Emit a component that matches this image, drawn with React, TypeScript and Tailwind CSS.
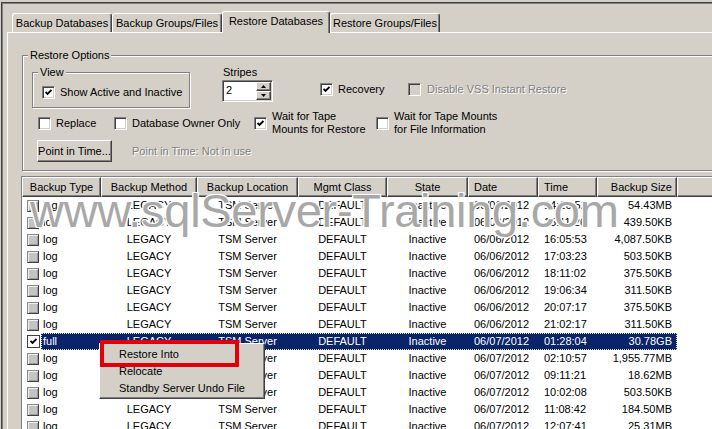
import React from "react";

type Row = { type: string; date: string; time: string; size: string; checked?: boolean };

const rows: Row[] = [
  { type: "log", date: "06/06/2012", time: "14:16:52", size: "54.43MB" },
  { type: "log", date: "06/06/2012", time: "15:11:26", size: "439.50KB" },
  { type: "log", date: "06/06/2012", time: "16:05:53", size: "4,087.50KB" },
  { type: "log", date: "06/06/2012", time: "17:03:23", size: "503.50KB" },
  { type: "log", date: "06/06/2012", time: "18:11:02", size: "375.50KB" },
  { type: "log", date: "06/06/2012", time: "19:06:34", size: "311.50KB" },
  { type: "log", date: "06/06/2012", time: "20:07:17", size: "375.50KB" },
  { type: "log", date: "06/06/2012", time: "21:02:17", size: "311.50KB" },
  { type: "full", date: "06/07/2012", time: "01:28:04", size: "30.78GB", checked: true },
  { type: "log", date: "06/07/2012", time: "02:10:57", size: "1,955.77MB" },
  { type: "log", date: "06/07/2012", time: "09:11:21", size: "18.62MB" },
  { type: "log", date: "06/07/2012", time: "10:02:08", size: "503.50KB" },
  { type: "log", date: "06/07/2012", time: "11:08:42", size: "184.50MB" },
  { type: "log", date: "06/07/2012", time: "12:07:41", size: "25.31MB" },
];

const raised =
  "border border-white border-r-[#404040] border-b-[#404040] shadow-[inset_-1px_-1px_0_#808080]";

const CheckMark = () => (
  <svg width="7" height="7" viewBox="0 0 7 7">
    <path d="M0.5 3 L2.5 5 L6.5 1" stroke="#000" strokeWidth="1.9" fill="none" />
  </svg>
);

function Box({ checked, disabled }: { checked?: boolean; disabled?: boolean }) {
  return (
    <span
      className={`flex h-[13px] w-[13px] shrink-0 items-center justify-center border border-[#808080] border-r-white border-b-white shadow-[inset_1px_1px_0_#404040,inset_-1px_-1px_0_#d4d0c8] ${
        disabled ? "bg-[#d4d0c8]" : "bg-white"
      }`}
    >
      {checked && <CheckMark />}
    </span>
  );
}

function Tab({ label, w, active }: { label: string; w: string; active?: boolean }) {
  if (active)
    return (
      <div
        className={`relative z-10 -mb-px flex h-[22px] items-center justify-center rounded-t-[3px] border-t border-l border-white border-r border-r-[#404040] bg-[#d4d0c8] pb-[2px] shadow-[inset_-1px_0_0_#808080] ${w}`}
      >
        {label}
      </div>
    );
  return (
    <div
      className={`flex h-[19px] items-center justify-center rounded-t-[3px] border-t border-l border-white border-r border-r-[#404040] shadow-[inset_-1px_0_0_#808080] ${w}`}
    >
      {label}
    </div>
  );
}

const disabledText = "text-[#808080] [text-shadow:1px_1px_0_#fff]";

export default function App() {
  return (
    <div className="relative h-[429px] w-[712px] overflow-hidden bg-[#d4d0c8] font-['Liberation_Sans',Arial,sans-serif] text-[11px] leading-[13px] text-black">
      <div className="mt-[2px] ml-px h-[440px] border-t border-l border-[#404040] shadow-[inset_1px_1px_0_#808080]">
        {/* tabs */}
        <div className="flex h-[29px] items-end pl-[10px]">
          <Tab label="Backup Databases" w="w-[100px]" />
          <Tab label="Backup Groups/Files" w="w-[110px]" />
          <Tab label="Restore Databases" w="w-[108px]" active />
          <Tab label="Restore Groups/Files" w="w-[110px]" />
        </div>

        <div className="ml-[5px] h-[420px] border-t border-l border-white">
          {/* Restore Options */}
          <fieldset className="mt-[16px] ml-[14px] w-[700px] border border-[#808080] pb-[8px] shadow-[inset_1px_1px_0_#fff,1px_1px_0_#fff]">
            <legend className="ml-[5px] bg-[#d4d0c8] px-[2px]">Restore Options</legend>

            <div className="mt-[4px] flex items-start">
              <fieldset className="ml-[9px] w-[158px] border border-[#808080] pt-[7px] pb-[8px] pl-[9px] shadow-[inset_1px_1px_0_#fff,1px_1px_0_#fff]">
                <legend className="ml-[-4px] bg-[#d4d0c8] px-[2px]">View</legend>
                <div className="flex h-[13px] items-center gap-[5px]">
                  <Box checked />
                  <span>Show Active and Inactive</span>
                </div>
              </fieldset>

              <div className="ml-[32px] flex w-[51px] flex-col">
                <span className="pl-px">Stripes</span>
                <div className="mt-px flex h-[22px] border border-[#808080] border-r-white border-b-white bg-white shadow-[inset_1px_1px_0_#404040,inset_-1px_-1px_0_#d4d0c8]">
                  <span className="flex-1 pt-[3px] pl-[3px]">2</span>
                  <div className="flex w-[16px] flex-col py-px pr-px">
                    <div className={`flex h-[9px] items-center justify-center bg-[#d4d0c8] ${raised}`}>
                      <svg width="5" height="3" viewBox="0 0 5 3">
                        <path d="M2.5 0 L5 3 L0 3 Z" fill="#000" />
                      </svg>
                    </div>
                    <div className={`flex h-[9px] items-center justify-center bg-[#d4d0c8] ${raised}`}>
                      <svg width="5" height="3" viewBox="0 0 5 3">
                        <path d="M0 0 L5 0 L2.5 3 Z" fill="#000" />
                      </svg>
                    </div>
                  </div>
                </div>
              </div>

              <div className="mt-[17px] ml-[47px] flex w-[88px] items-center gap-[5px]">
                <Box checked />
                <span>Recovery</span>
              </div>
              <div className="mt-[17px] flex items-center gap-[6px]">
                <Box disabled />
                <span className={disabledText}>Disable VSS Instant Restore</span>
              </div>
            </div>

            <div className="mt-[2px] ml-[15px] flex h-[26px] items-center">
              <div className="flex w-[76px] items-center gap-[5px]">
                <Box />
                <span>Replace</span>
              </div>
              <div className="flex w-[140px] items-center gap-[5px]">
                <Box />
                <span>Database Owner Only</span>
              </div>
              <div className="flex w-[122px] items-center gap-[5px]">
                <Box checked />
                <span>
                  Wait for Tape
                  <br />
                  Mounts for Restore
                </span>
              </div>
              <div className="flex items-center gap-[5px]">
                <Box />
                <span>
                  Wait for Tape Mounts
                  <br />
                  for File Information
                </span>
              </div>
            </div>

            <div className="mt-[4px] ml-[14px] flex items-center">
              <button className={`flex h-[22px] w-[75px] items-center justify-center bg-[#d4d0c8] ${raised}`}>
                Point in Time...
              </button>
              <span className={`ml-[20px] ${disabledText}`}>Point in Time: Not in use</span>
            </div>
          </fieldset>

          {/* list */}
          <div className="mt-[5px] ml-[13px] w-[700px] border-t border-l border-[#808080] bg-white">
            <div className="flex h-[20px] bg-[#d4d0c8]">
              <div className={`flex w-[79px] items-center justify-center ${raised}`}>Backup Type</div>
              <div className={`flex w-[96px] items-center justify-center ${raised}`}>Backup Method</div>
              <div className={`flex w-[101px] items-center justify-center ${raised}`}>Backup Location</div>
              <div className={`flex w-[89px] items-center justify-center ${raised}`}>Mgmt Class</div>
              <div className={`flex w-[81px] items-center justify-center ${raised}`}>State</div>
              <div className={`flex w-[70px] items-center pl-[5px] ${raised}`}>Date</div>
              <div className={`flex w-[59px] items-center pl-[5px] ${raised}`}>Time</div>
              <div className={`flex w-[80px] items-center justify-end pr-[4px] ${raised}`}>Backup Size</div>
              <div className={`flex-1 ${raised}`} />
            </div>

            {rows.map((r, i) => (
              <div key={i} className="flex h-[17px] items-center">
                <div className="flex w-[19px] pl-[5px]">
                  {r.checked ? (
                    <span className="flex h-[13px] w-[13px] items-center justify-center border border-[#404040] bg-white">
                      <CheckMark />
                    </span>
                  ) : (
                    <span className="h-[12px] w-[12px] border border-[#8a8a8a] border-r-[#404040] border-b-[#404040] bg-[#c4c4c4] shadow-[inset_1px_1px_0_#eeeeee,inset_-1px_-1px_0_#9a9a9a]" />
                  )}
                </div>
                <div
                  className={`flex h-[17px] w-[636px] items-center ${
                    r.checked ? "bg-[#0a246a] text-white outline-1 -outline-offset-1 outline-dotted outline-[#e8e2b0]" : ""
                  }`}
                >
                  <span className="w-[60px] pl-[2px]">{r.type}</span>
                  <span className="w-[96px] text-center">LEGACY</span>
                  <span className="w-[101px] text-center">TSM Server</span>
                  <span className="w-[89px] text-center">DEFAULT</span>
                  <span className="w-[81px] text-center">Inactive</span>
                  <span className="w-[70px] pl-[6px]">{r.date}</span>
                  <span className="w-[59px] pl-[6px]">{r.time}</span>
                  <span className="w-[80px] pr-[5px] text-right">{r.size}</span>
                </div>
              </div>
            ))}
          </div>
        </div>
      </div>

      {/* watermark */}
      <div className="pointer-events-none absolute top-[187px] left-[30px] text-[47px] leading-none tracking-[-0.3px] whitespace-nowrap text-[#a8a8a8] [text-shadow:1px_0_0_#fff,-1px_0_0_#fff,0_1px_0_#fff,0_-1px_0_#fff,1px_1px_0_#fff,-1px_-1px_0_#fff,1px_-1px_0_#fff,-1px_1px_0_#fff]">
        www.sqlServer-Training.com
      </div>

      {/* context menu */}
      <div className={`absolute top-[343px] left-[99px] w-[166px] bg-[#d4d0c8] pt-[2px] pb-px ${raised}`}>
        <div className="flex h-[17px] items-center pl-[19px]">Restore Into</div>
        <div className="flex h-[17px] items-center pl-[19px]">Relocate</div>
        <div className="flex h-[17px] items-center pl-[19px]">Standby Server Undo File</div>
      </div>
      <div className="absolute top-[340px] left-[100px] h-[27px] w-[139px] border-4 border-[#e3000b]" />
    </div>
  );
}
